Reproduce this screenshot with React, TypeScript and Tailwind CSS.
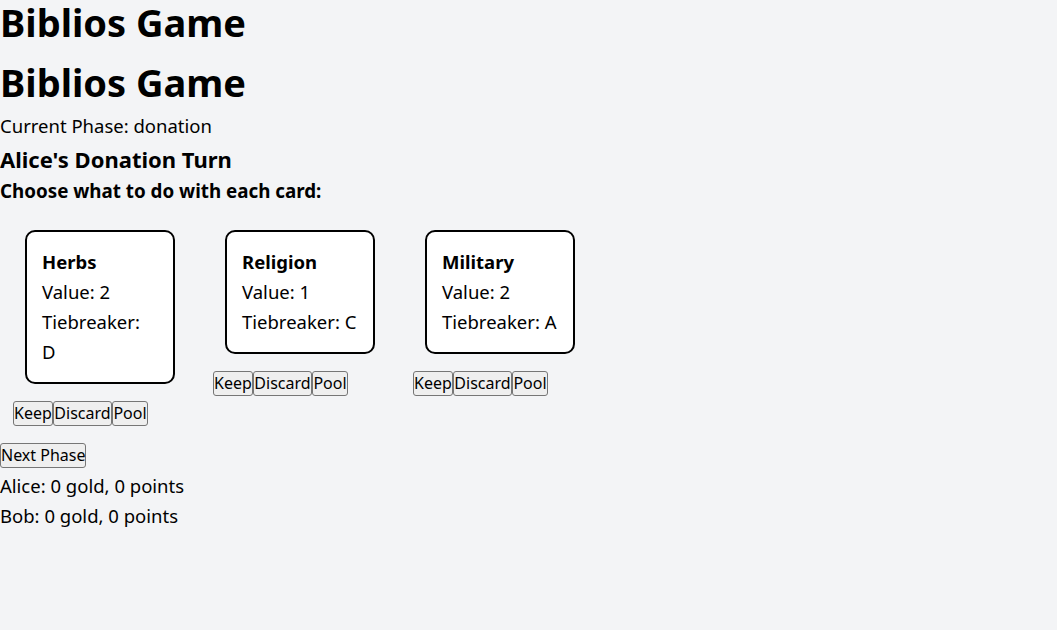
const cards = [
  { name: "Herbs", value: 2, tiebreaker: "D", split: true },
  { name: "Religion", value: 1, tiebreaker: "C", split: false },
  { name: "Military", value: 2, tiebreaker: "A", split: false },
];

const players = [
  { name: "Alice", gold: 0, points: 0 },
  { name: "Bob", gold: 0, points: 0 },
];

function ActionButton({ label, width }: { label: string; width: string }) {
  return (
    <button
      className={`h-[25px] ${width} whitespace-nowrap border border-[#767676] rounded-[3px] bg-[#efefef] text-[16px] leading-[23px] text-black text-center px-0`}
    >
      {label}
    </button>
  );
}

export default function App() {
  return (
    <div
      className="min-h-[630px] bg-[#f3f4f6] text-black"
      style={{ fontFamily: '"Noto Sans", "Open Sans", sans-serif' }}
    >
      <h1 className="text-[38px] leading-[44px] font-bold">Biblios Game</h1>
      <h1 className="mt-[16px] text-[38px] leading-[44px] font-bold">Biblios Game</h1>
      <div className="mt-[7px] text-[18.5px] leading-[30px]">Current Phase: donation</div>
      <h3 className="mt-[2px] text-[22px] leading-[32px] font-bold">Alice's Donation Turn</h3>
      <h4 className="mt-[1px] text-[18.8px] leading-[30px] font-bold">Choose what to do with each card:</h4>

      {/* Cards */}
      <div className="flex items-start gap-[26px] pl-[13px] pt-[24px]">
        {cards.map((card) => (
          <div key={card.name} className="w-[174px]">
            <div className="ml-[12px] w-[150px] border-2 border-black rounded-[10px] bg-white p-[15px] text-[18.5px] leading-[30px]">
              <div className="font-bold">{card.name}</div>
              <div>Value: {card.value}</div>
              {card.split ? (
                <>
                  <div>Tiebreaker:</div>
                  <div>{card.tiebreaker}</div>
                </>
              ) : (
                <div className="whitespace-nowrap">Tiebreaker: {card.tiebreaker}</div>
              )}
            </div>
            <div className="mt-[17px] flex">
              <ActionButton label="Keep" width="w-[40px]" />
              <ActionButton label="Discard" width="w-[59px]" />
              <ActionButton label="Pool" width="w-[36px]" />
            </div>
          </div>
        ))}
      </div>

      <div className="mt-[17px]">
        <ActionButton label="Next Phase" width="w-[86px]" />
      </div>
      <div className="mt-[3px] text-[18.5px] leading-[30px]">
        {players.map((p) => (
          <div key={p.name}>
            {p.name}: {p.gold} gold, {p.points} points
          </div>
        ))}
      </div>
    </div>
  );
}
